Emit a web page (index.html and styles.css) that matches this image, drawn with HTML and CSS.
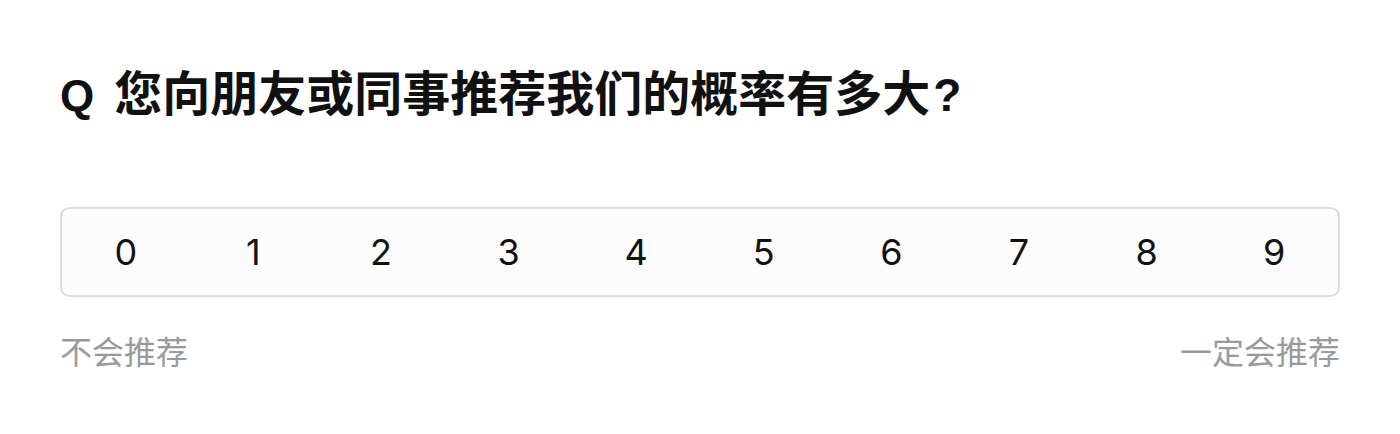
FILE: index.html
```html
<!DOCTYPE html>
<html lang="zh-CN">
<head>
<meta charset="utf-8">
<title>NPS</title>
<link rel="stylesheet" href="styles.css">
</head>
<body>
<div class="survey">
  <h1 class="question"><span class="q-mark">Q</span>您向朋友或同事推荐我们的概率有多大<span class="q-end">?</span></h1>
  <div class="scale">
    <div class="score">0</div>
    <div class="score">1</div>
    <div class="score">2</div>
    <div class="score">3</div>
    <div class="score">4</div>
    <div class="score">5</div>
    <div class="score">6</div>
    <div class="score">7</div>
    <div class="score">8</div>
    <div class="score">9</div>
  </div>
  <div class="labels">
    <span>不会推荐</span>
    <span>一定会推荐</span>
  </div>
</div>
</body>
</html>
```

FILE: styles.css
```css
html, body {
  margin: 0;
  padding: 0;
  background: #ffffff;
}
body {
  font-family: "Inter", "Noto Sans CJK SC", sans-serif;
  color: #111111;
}
.survey {
  padding: 58px 60px 0 60px;
}
.question {
  margin: 0;
  height: 64px;
  display: flex;
  align-items: baseline;
  font-family: "Noto Sans CJK SC", sans-serif;
  font-size: 48px;
  line-height: 64px;
  font-weight: 700;
  color: #111111;
}
.q-mark,
.q-end {
  font-family: "Liberation Sans", sans-serif;
  font-weight: 700;
  line-height: 64px;
}
.q-mark {
  font-size: 44px;
  margin-left: 0;
  margin-right: 20px;
}
.q-end {
  font-size: 46px;
  margin-left: 3px;
}
.scale {
  margin-top: 85px;
  display: grid;
  grid-template-columns: repeat(10, 1fr);
  height: 86px;
  border: 2px solid #dcdcdc;
  border-radius: 9px;
  background: #fcfcfc;
}
.score {
  display: flex;
  align-items: center;
  justify-content: center;
  font-size: 36px;
  font-weight: 400;
  color: #111111;
}
.labels {
  margin-top: 31px;
  display: flex;
  justify-content: space-between;
  font-family: "Noto Sans CJK SC", sans-serif;
  font-size: 32px;
  line-height: 44px;
  color: #9a9a9a;
}
```
